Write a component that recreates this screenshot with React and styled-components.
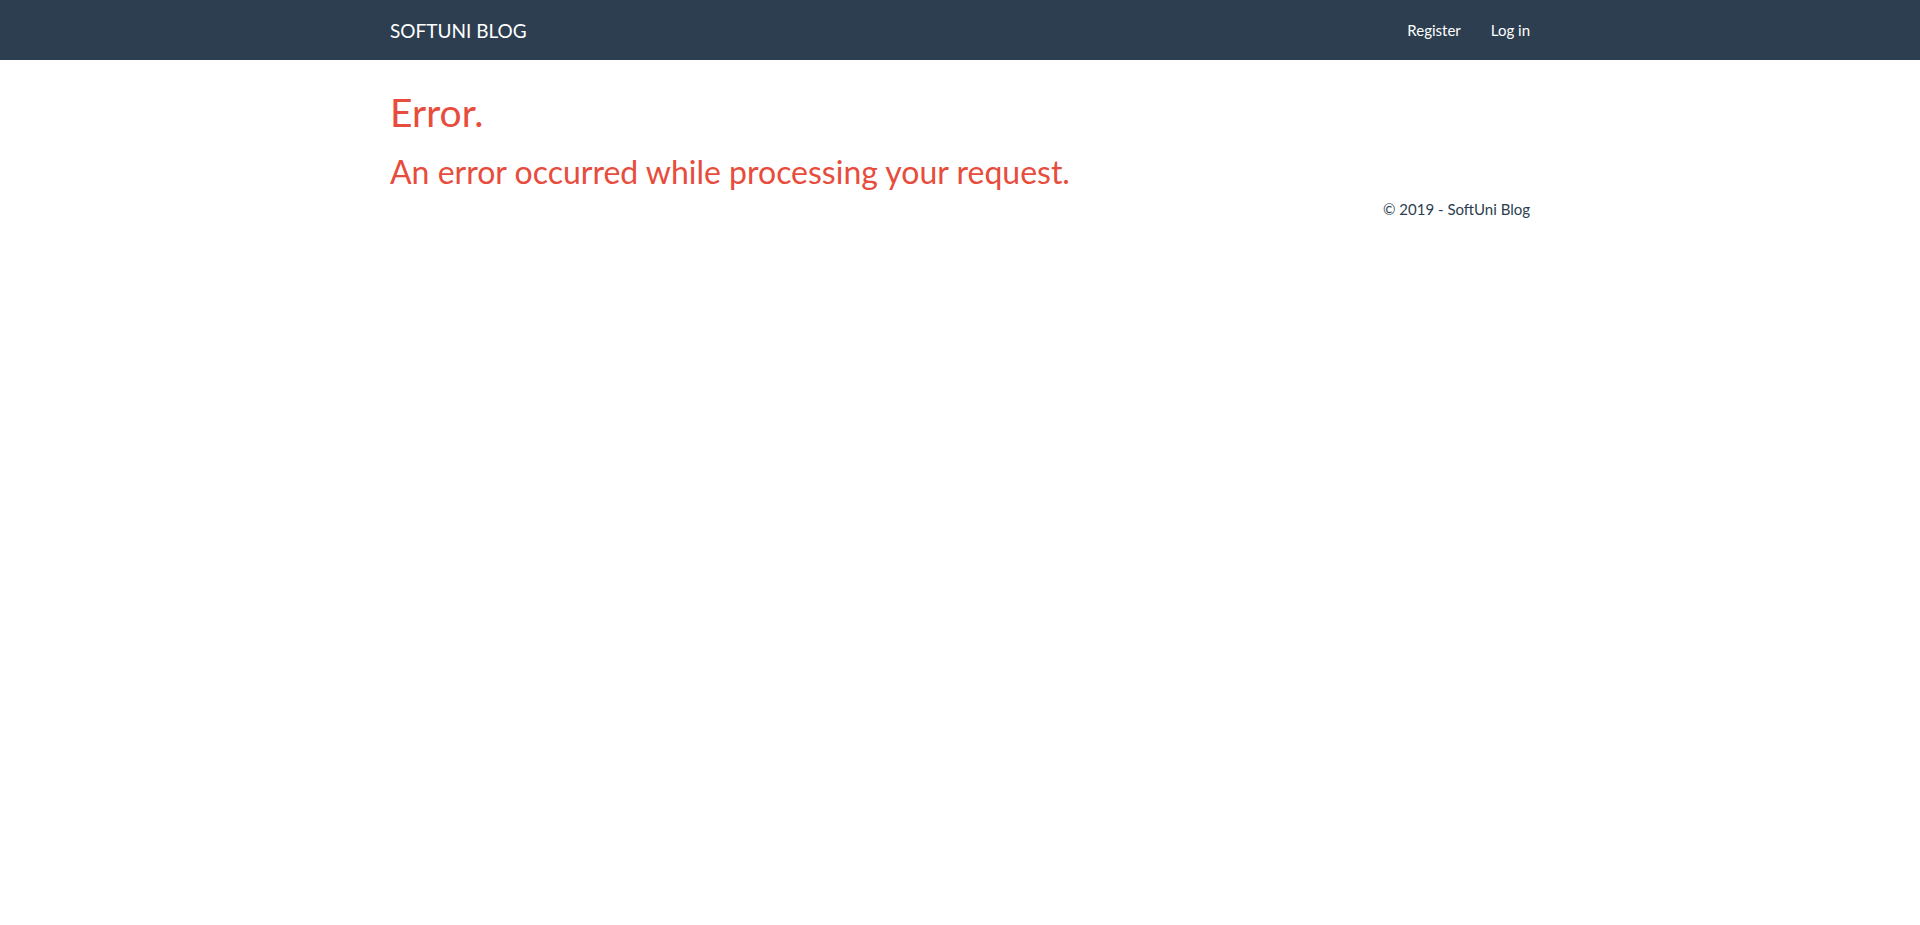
import React from "react";
import { styled, createGlobalStyle } from "styled-components";

const GlobalStyle = createGlobalStyle`
  * {
    box-sizing: border-box;
  }

  body {
    margin: 0;
    background-color: #ffffff;
    color: #2c3e50;
    font-family: Lato, "Helvetica Neue", Helvetica, Arial, sans-serif;
    font-size: 15px;
    line-height: 1.428571;
  }
`;

const Navbar = styled.nav`
  height: 60px;
  width: 100%;
  background-color: #2c3e50;
`;

const Container = styled.div`
  width: 1170px;
  margin: 0 auto;
  padding: 0 15px;
`;

const NavInner = styled(Container)`
  height: 100%;
  display: flex;
  justify-content: space-between;
  align-items: center;
`;

const Brand = styled.a`
  color: #ffffff;
  font-size: 19px;
  line-height: 21px;
  text-decoration: none;
`;

const NavList = styled.ul`
  display: flex;
  list-style: none;
  margin: 0 -15px 0 0;
  padding: 0;
`;

const NavLink = styled.a`
  display: block;
  padding: 19.5px 15px 20.5px;
  color: #ffffff;
  font-size: 15px;
  line-height: 20px;
  text-decoration: none;
`;

const Main = styled(Container)`
  padding-top: 31px;
`;

const Title = styled.h1`
  margin: 0 0 20px;
  font-size: 39px;
  font-weight: 400;
  line-height: 1.1;
  color: #e74c3c;
`;

const SubTitle = styled.h2`
  margin: 0;
  font-size: 32px;
  font-weight: 400;
  line-height: 1.1;
  color: #e74c3c;
`;

const Footer = styled.footer`
  margin-top: 10px;
  text-align: right;
  color: #2c3e50;
`;

const FooterText = styled.p`
  margin: 0;
`;

const App = () => {
  return (
    <>
      <GlobalStyle />
      <Navbar>
        <NavInner>
          <Brand href="#">SOFTUNI BLOG</Brand>
          <NavList>
            <li>
              <NavLink href="#">Register</NavLink>
            </li>
            <li>
              <NavLink href="#">Log in</NavLink>
            </li>
          </NavList>
        </NavInner>
      </Navbar>
      <Main>
        <Title>Error.</Title>
        <SubTitle>An error occurred while processing your request.</SubTitle>
        <Footer>
          <FooterText>© 2019 - SoftUni Blog</FooterText>
        </Footer>
      </Main>
    </>
  );
};

export default App;
